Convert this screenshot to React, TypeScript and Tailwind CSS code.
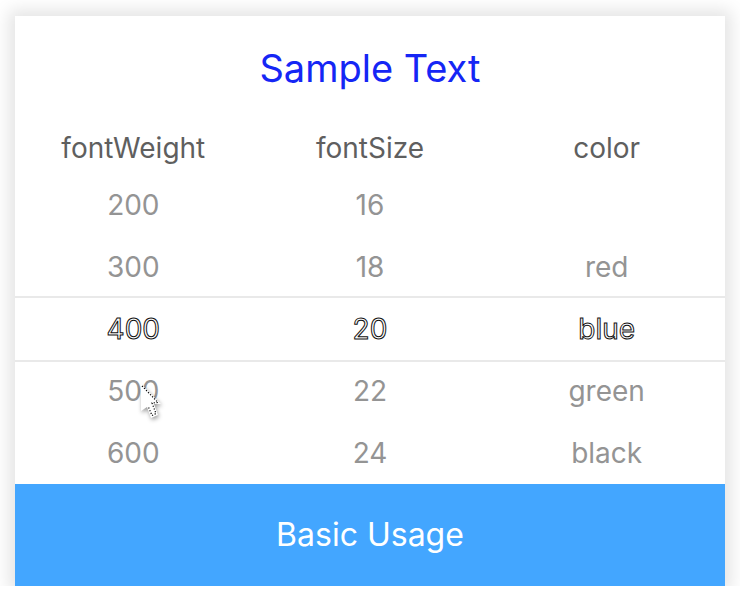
import { useState } from "react";

type Column = { name: string; options: string[] };

const columns: Column[] = [
  { name: "fontWeight", options: ["200", "300", "400", "500", "600"] },
  { name: "fontSize", options: ["16", "18", "20", "22", "24"] },
  { name: "color", options: ["", "red", "blue", "green", "black"] },
];

function PickerColumn({ name, options }: Column) {
  const [selected, setSelected] = useState(2);
  return (
    <section className="flex flex-col text-center text-[28px]">
      <h2 className="mb-2 leading-9 text-[#5f5f5f]">{name}</h2>
      {options.map((option, index) => {
        if (option === "") {
          return <div key={index} className="h-[62px]" />;
        }
        return (
          <button
            key={index}
            type="button"
            aria-pressed={index === selected}
            onClick={() => setSelected(index)}
            className={
              index === selected
                ? "-my-0.5 h-[66px] border-y-2 border-[#e9e9e9] text-white [-webkit-text-stroke:1px_#111111]"
                : "h-[62px] text-[#949494]"
            }
          >
            {option}
          </button>
        );
      })}
    </section>
  );
}

function Cursor() {
  return (
    <svg
      aria-hidden="true"
      viewBox="0 0 24 36"
      className="pointer-events-none absolute top-[367px] left-[124px] h-9 w-6 drop-shadow-[1px_2px_2px_rgba(0,0,0,0.4)]"
    >
      <path d="M2 1V28L8 24L12 35L19 32L15 21H22Z" fill="#ffffff" />
      <path
        d="M3 3L19 19.500L13 20L17 30.500L13 32.500L9 23"
        fill="none"
        stroke="#000000"
        strokeWidth="1.2"
        strokeDasharray="1.2 1.7"
      />
    </svg>
  );
}

export default function App() {
  return (
    <div className="bg-white font-['Inter','Liberation_Sans',sans-serif]">
      <div className="overflow-hidden px-[15px] pt-4">
        <main className="relative bg-white shadow-[0_0_16px_6px_rgba(0,0,0,0.11)]">
          <h1 className="pt-7 pb-[38px] text-center text-[38px] leading-12 text-[#1526f5]">
            Sample Text
          </h1>
          <div className="grid grid-cols-3">
            {columns.map((column) => (
              <PickerColumn key={column.name} {...column} />
            ))}
          </div>
          <button
            type="button"
            className="block h-[102px] w-full bg-[#43a6ff] text-center text-[32px] text-white"
          >
            Basic Usage
          </button>
          <Cursor />
        </main>
      </div>
    </div>
  );
}
